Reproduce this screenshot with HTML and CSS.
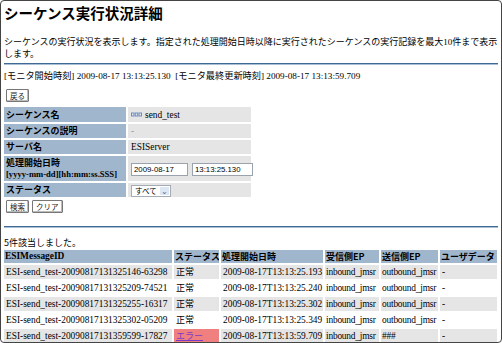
FILE: index.html
```html
<!DOCTYPE html>
<html lang="ja">
<head>
  <meta charset="UTF-8" />
  <title>シーケンス実行状況詳細</title>
  <link rel="stylesheet" href="styles.css">
</head>
<body>
  <div class="frame">
    <h1>シーケンス実行状況詳細</h1>
    <p class="desc">シーケンスの実行状況を表示します。指定された処理開始日時以降に実行されたシーケンスの実行記録を最大10件まで表示<br>します。</p>
    <hr class="rule">
    <p class="monitor">[モニタ開始時刻] 2009-08-17 13:13:25.130 &nbsp;[モニタ最終更新時刻] 2009-08-17 13:13:59.709</p>

    <div class="back"><button class="btn">戻る</button></div>

    <table class="form">
      <tr>
        <th>シーケンス名</th>
        <td><span class="seq-icon"><svg width="11" height="5" viewBox="0 0 11 5"><rect x="0.5" y="1" width="2.5" height="3" fill="none" stroke="#6d8fc0" stroke-width="1"/><rect x="4.25" y="1" width="2.5" height="3" fill="none" stroke="#6d8fc0" stroke-width="1"/><rect x="8" y="1" width="2.5" height="3" fill="none" stroke="#6d8fc0" stroke-width="1"/></svg></span>send_test</td>
      </tr>
      <tr>
        <th>シーケンスの説明</th>
        <td class="muted">-</td>
      </tr>
      <tr>
        <th>サーバ名</th>
        <td>ESIServer</td>
      </tr>
      <tr class="two-line">
        <th>処理開始日時<br><span class="fmt">[yyyy-mm-dd][hh:mm:ss.SSS]</span></th>
        <td class="inputs"><input type="text" class="date" value="2009-08-17"><input type="text" class="time" value="13:13:25.130"></td>
      </tr>
      <tr>
        <th>ステータス</th>
        <td><span class="select-box">すべて<span class="select-arrow">&#8964;</span></span></td>
      </tr>
    </table>

    <div class="actions"><button class="btn">検索</button><button class="btn">クリア</button></div>

    <hr class="rule rule-lower">
    <p class="count">5件該当しました。</p>

    <table class="results">
      <colgroup>
        <col class="c-id"><col class="c-st"><col class="c-dt"><col class="c-in"><col class="c-out"><col class="c-user">
      </colgroup>
      <tr>
        <th>ESIMessageID</th>
        <th class="ja">ステータス</th>
        <th class="ja">処理開始日時</th>
        <th class="ja">受信側EP</th>
        <th class="ja">送信側EP</th>
        <th class="ja">ユーザデータ</th>
      </tr>
      <tr class="odd">
        <td>ESI-send_test-20090817131325146-63298</td><td class="ja">正常</td><td>2009-08-17T13:13:25.193</td><td class="ep">inbound_jmsr</td><td class="ep">outbound_jmsr</td><td>-</td>
      </tr>
      <tr>
        <td>ESI-send_test-20090817131325209-74521</td><td class="ja">正常</td><td>2009-08-17T13:13:25.240</td><td class="ep">inbound_jmsr</td><td class="ep">outbound_jmsr</td><td>-</td>
      </tr>
      <tr class="odd">
        <td>ESI-send_test-20090817131325255-16317</td><td class="ja">正常</td><td>2009-08-17T13:13:25.302</td><td class="ep">inbound_jmsr</td><td class="ep">outbound_jmsr</td><td>-</td>
      </tr>
      <tr>
        <td>ESI-send_test-20090817131325302-05209</td><td class="ja">正常</td><td>2009-08-17T13:13:25.349</td><td class="ep">inbound_jmsr</td><td class="ep">outbound_jmsr</td><td>-</td>
      </tr>
      <tr class="odd">
        <td>ESI-send_test-20090817131359599-17827</td><td class="ja error"><a href="#">エラー</a></td><td>2009-08-17T13:13:59.709</td><td class="ep">inbound_jmsr</td><td class="ep">###</td><td>-</td>
      </tr>
    </table>
  </div>
</body>
</html>
```

FILE: styles.css
```css
body {
  margin: 0;
  background-color: #fff;
  font-family: "Liberation Serif", "Noto Sans CJK JP", serif;
  font-size: 9.4px;
  color: #000;
}
.frame {
  height: 343px;
  box-sizing: border-box;
  border: 1px solid #444;
  border-radius: 4px;
  padding: 0 3px;
  overflow: hidden;
}
h1 {
  margin: 3px 0 0 0;
  font-family: "Noto Sans CJK JP", sans-serif;
  font-size: 14.5px;
  line-height: 18px;
  font-weight: bold;
}
.desc {
  margin: 14px 0 0 0;
  font-size: 9px;
  line-height: 12px;
  white-space: nowrap;
}
.rule {
  margin: 3px 0 0 0;
  height: 0;
  border: none;
  border-top: 1px solid #3f6a96;
  border-bottom: 1px solid #a9bfd6;
}
.monitor {
  margin: 5px 0 0 0;
  font-size: 9.2px;
  line-height: 12px;
}
.btn {
  font-family: "Noto Sans CJK JP", sans-serif;
  font-size: 7.5px;
  line-height: 9px;
  padding: 1px 3px;
  margin: 0 3px 0 0;
  background: #fff;
  color: #222;
  border: 1px solid #777;
  box-shadow: inset -1px -1px 0 #bbb;
  border-radius: 1px;
}
.back {
  margin-top: 7px;
  padding-left: 2px;
}
.form {
  margin-top: 3px;
  margin-left: -2px;
  border-spacing: 2px;
  table-layout: fixed;
  width: 251px;
}
.form th {
  width: 118px;
  background-color: #a0b6cd;
  text-align: left;
  font-family: "Noto Sans CJK JP", sans-serif;
  font-size: 9px;
  line-height: 14px;
  padding: 0 2px;
  font-weight: bold;
  vertical-align: middle;
  white-space: nowrap;
}
.form .two-line th {
  line-height: 11px;
  padding: 1px 2px;
}
.form th .fmt {
  font-family: "Liberation Serif", serif;
  font-size: 8.6px;
}
.form td {
  background-color: #e5e5e5;
  padding: 0 3px;
  line-height: 14px;
  white-space: nowrap;
}
.form td.muted {
  color: #999;
}
.seq-icon {
  display: inline-block;
  margin-right: 3px;
  vertical-align: 1px;
}
.inputs input {
  font-family: "Liberation Sans", sans-serif;
  font-size: 7.8px;
  height: 13px;
  box-sizing: border-box;
  border: 1px solid #9aa3ad;
  padding: 0 2px;
  margin: 0;
  vertical-align: middle;
}
.inputs .date {
  width: 57px;
  margin-right: 4px;
}
.inputs .time {
  width: 61px;
}
.select-box {
  display: inline-flex;
  align-items: center;
  justify-content: space-between;
  width: 40px;
  height: 12px;
  box-sizing: border-box;
  padding: 0 1px 0 3px;
  border: 1px solid #a5acb5;
  background: #fff;
  font-family: "Noto Sans CJK JP", sans-serif;
  font-size: 7.5px;
  line-height: 10px;
  vertical-align: middle;
}
.select-arrow {
  display: inline-flex;
  align-items: center;
  justify-content: center;
  width: 9px;
  height: 8px;
  background: #dde6f3;
  color: #4d6d9c;
  font-size: 8px;
  line-height: 8px;
}
.actions {
  margin-top: 1px;
  padding-left: 2px;
}
.rule-lower {
  margin-top: 13px;
}
.count {
  margin: 9px 0 0 0;
  font-family: "Noto Sans CJK JP", sans-serif;
  font-size: 9px;
  line-height: 11px;
}
.results {
  border-spacing: 2px;
  margin-left: -2px;
  width: 497px;
  table-layout: fixed;
}
.results th {
  height: 13px;
  background-color: #a0b6cd;
  text-align: left;
  font-weight: bold;
  line-height: 13px;
  padding: 0 1px;
  white-space: nowrap;
  overflow: hidden;
}
.results td {
  height: 14px;
  line-height: 14px;
  padding: 0 2px;
  white-space: nowrap;
  overflow: hidden;
}
.results td.ep {
  padding: 0 1px;
  letter-spacing: -0.2px;
}
.results .ja {
  font-family: "Noto Sans CJK JP", sans-serif;
  font-size: 9px;
}
.results tr.odd td {
  background-color: #e5e5e5;
}
.results tr.odd td.error {
  background-color: #f08080;
}
.results td.error a {
  color: #7a3cc8;
}
.c-id { width: 168px; }
.c-st { width: 45px; }
.c-dt { width: 102px; }
.c-in { width: 54px; }
.c-out { width: 57px; }
.c-user { width: 57px; }
```
